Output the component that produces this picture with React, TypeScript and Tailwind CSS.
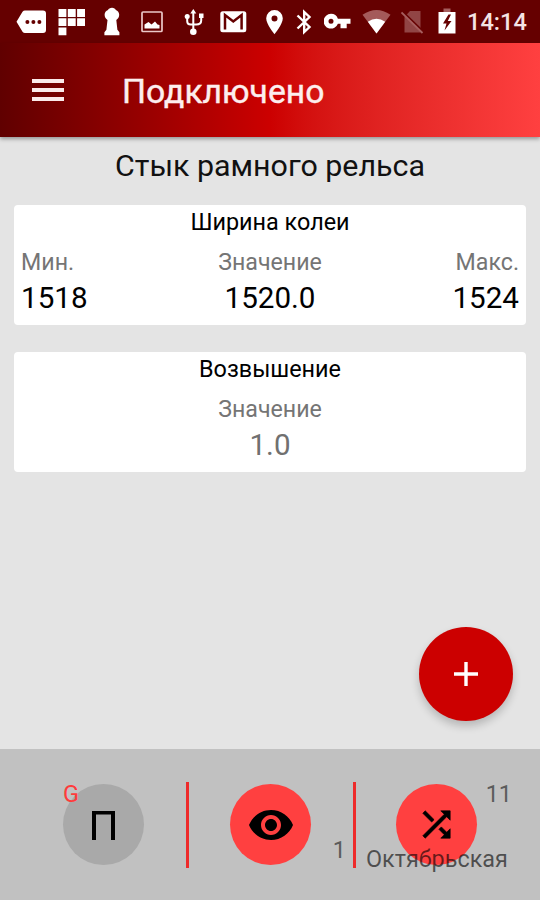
import type { ReactNode } from "react";

function StatusIcons() {
  return (
    <div className="flex h-[43px] items-center bg-[#650000] text-white">
      <svg className="ml-4 h-[43px] w-[30px] shrink-0" viewBox="16 0 30 43" fill="#fff">
        <path d="M25 10.5h18q3 0 3 3v16.500q0 3-3 3H25q-1.500 0-2.500-1.300L16.500 21.800l6-10q1-1.300 2.500-1.300z" />
        <g fill="#650000">
          <circle cx="27.400" cy="22" r="2" />
          <circle cx="33.400" cy="22" r="2" />
          <circle cx="39.400" cy="22" r="2" />
        </g>
      </svg>
      <svg className="ml-3 h-[43px] w-[27px] shrink-0" viewBox="58 0 27 43" fill="#fff">
        <path d="M58.500 9h7.900v7.900h-7.900zM67.800 9h7.900v7.900h-7.900zM77.100 9h7.900v7.900h-7.900zM58.500 18.200h7.900v7.900h-7.900zM67.800 18.200h7.900v7.900h-7.900zM77.100 18.200h7.900v7.900h-7.900zM58.500 27.400h7.900v7.900h-7.900z" />
      </svg>
      <svg className="ml-[18px] h-[43px] w-[18px] shrink-0" viewBox="103 0 18 43" fill="#fff">
        <path d="M112 7.800c2 0 3.200 1 3.800 2.200 2 .7 3.400 2.500 3.400 4.800 0 2.500-1.400 4.200-2.900 5.200l1.100 9.700 2 2.500v3H104.400v-3l2-2.500 1.100-9.700c-1.500-1-2.900-2.700-2.900-5.200 0-2.300 1.400-4.100 3.400-4.800.600-1.200 2-2.200 4-2.200z" />
      </svg>
      <svg className="ml-5 h-[43px] w-[22px] shrink-0" viewBox="141 0 22 43">
        <rect x="142" y="12" width="20" height="19.500" rx="1" fill="none" stroke="#ecc8c8" strokeWidth="1.700" />
        <path d="M144.500 28.500v-4l4-2.500 3 2.500 3.500-3 2.500 3 2 .5v3.500z" fill="#fff" />
      </svg>
      <svg className="ml-[21px] h-[43px] w-[20px] shrink-0" viewBox="184 0 20 43" fill="#fff">
        <path d="M193.300 9l3 4.500h-6zM199 13.500h4.500V18H199z" />
        <circle cx="187.200" cy="16.500" r="2.500" />
        <circle cx="193.300" cy="31.800" r="3.300" />
        <path d="M193.300 12v18M187.200 17v4q0 3.500 3.500 3.500h5.500q5 0 5-4v-3" fill="none" stroke="#fff" strokeWidth="2" />
      </svg>
      <svg className="ml-4 h-[43px] w-[27px] shrink-0" viewBox="220 0 27 43">
        <rect x="220.300" y="11.300" width="26" height="21" rx="2.500" fill="#fff" />
        <path d="M225 29.500V15l8.300 6.500L241.600 15v14.500" fill="none" stroke="#650000" strokeWidth="2.500" />
      </svg>
      <svg className="ml-[19px] h-[43px] w-[17px] shrink-0" viewBox="266 0 17 43">
        <path fillRule="evenodd" d="M274.500 10a8.300 8.300 0 0 0-8.300 8.300c0 6.200 8.300 16 8.300 16s8.300-9.800 8.300-16a8.300 8.300 0 0 0-8.300-8.300zm0 5.400a3 3 0 1 1 0 6 3 3 0 0 1 0-6z" fill="#fff" />
      </svg>
      <svg className="ml-[13px] h-[43px] w-[16px] shrink-0" viewBox="296 0 16 43" fill="none" stroke="#fff" strokeWidth="2.400">
        <path d="M297.500 15.500l12 11.500-5.300 5V12l5.300 5-12 11.500" />
      </svg>
      <svg className="ml-3 h-[43px] w-[27px] shrink-0" viewBox="324 0 27 43">
        <path fillRule="evenodd" d="M331 13.800a7.400 7.400 0 1 0 6.900 10h2.600v4.400h6.200v-4.400h3.800v-5h-12.600a7.400 7.400 0 0 0-6.900-5zm0 5a2.500 2.500 0 1 1 0 5 2.500 2.500 0 0 1 0-5z" fill="#fff" />
      </svg>
      <svg className="ml-[11px] h-[43px] w-[30px] shrink-0" viewBox="362 0 30 43">
        <path d="M376.500 33.500L362.500 14.800q14-9.500 28 0z" fill="#a45a5a" />
        <path d="M376.500 33.500L367.800 21.700q8.700-6 17.400 0z" fill="#fff" />
      </svg>
      <svg className="ml-[9px] h-[43px] w-[23px] shrink-0" viewBox="401 0 23 43">
        <path d="M410 11h10.500v21.500h-16V17z" fill="#914545" />
        <path d="M403.500 12.500l20.500 20" stroke="#650000" strokeWidth="2" />
        <path d="M401.500 12.500l21 20.500" stroke="#a65e5e" strokeWidth="1.800" />
      </svg>
      <svg className="ml-[14px] h-[43px] w-[18px] shrink-0" viewBox="438 0 18 43">
        <path d="M443.500 8.500h7V12h-7z" fill="#a65e5e" />
        <path d="M438.500 12h17v21.500h-17z" fill="#fff" />
        <path d="M448.500 14.500l-5.500 9h3.500l-2 7 7-9.500h-3.700l3.200-6.500z" fill="#650000" />
      </svg>
      <span className="mt-[2px] ml-[11px] text-[23.6px] leading-none font-medium text-[#f5e4e4]">14:14</span>
    </div>
  );
}

function Card({ title, children }: { title: string; children: ReactNode }) {
  return (
    <section className="h-[120px] rounded-[4px] bg-white px-[7px] pt-[3px]">
      <h2 className="text-center text-[23.4px] leading-[29px] text-black">{title}</h2>
      {children}
    </section>
  );
}

function Field({ label, value, className }: { label: string; value: string; className: string }) {
  return (
    <div className={className}>
      <p className="text-[23.2px] leading-7 text-[#757575]">{label}</p>
      <p className="text-[29.6px] leading-[45px]">{value}</p>
    </div>
  );
}

export default function App() {
  return (
    <div className="flex h-[900px] w-[540px] flex-col overflow-hidden bg-[#e4e4e4] font-['Roboto',sans-serif]">
      <StatusIcons />
      <header className="flex h-[94px] shrink-0 items-center bg-linear-to-r from-[#600000] via-[#cc0000] to-[#ff4040] pl-8 shadow-[0_2px_4px_rgba(0,0,0,0.35)]">
        <button className="flex w-8 flex-col gap-[5px]" aria-label="Меню">
          <span className="h-1 bg-[#fbeaea]" />
          <span className="h-1 bg-[#fbeaea]" />
          <span className="h-1 bg-[#fbeaea]" />
        </button>
        <h1 className="mt-[3px] ml-[58px] text-[33.7px] leading-none font-normal text-[#fdeeee] [-webkit-text-stroke:0.4px_#fdeeee]">
          Подключено
        </h1>
      </header>

      <main className="relative flex-1 px-[14px] pt-[9px]">
        <p className="text-center text-[30.4px] leading-10 text-[#111]">Стык рамного рельса</p>
        <div className="mt-[18.500px] flex flex-col gap-[27px]">
          <Card title="Ширина колеи">
            <div className="mt-[11px] grid grid-cols-3 text-black">
              <Field label="Мин." value="1518" className="text-left" />
              <Field label="Значение" value="1520.0" className="text-center" />
              <Field label="Макс." value="1524" className="text-right" />
            </div>
          </Card>
          <Card title="Возвышение">
            <Field label="Значение" value="1.0" className="mt-[11px] text-center text-[#707070]" />
          </Card>
        </div>
        <button
          className="absolute right-[27px] bottom-[28px] flex size-[94px] items-center justify-center rounded-full bg-[#cc0000] shadow-[0_5px_8px_rgba(0,0,0,0.2)]"
          aria-label="Добавить"
        >
          <svg className="size-6" viewBox="0 0 24 24" stroke="#fff" strokeWidth="3.400">
            <path d="M12 0v24M0 12h24" />
          </svg>
        </button>
      </main>

      <footer className="flex h-[151px] shrink-0 items-center bg-[#c1c1c1] text-[23.4px] leading-7 text-[#5c5c5c]">
        <div className="flex w-[186px] justify-end pr-[42px]">
          <button className="relative flex size-[81px] items-center justify-center rounded-full bg-[#a9a9a9]">
            <svg className="mt-[2px] h-[29px] w-[23px]" viewBox="0 0 23 29" fill="none" stroke="#000" strokeWidth="4">
              <path d="M2 29V1.500h19V29" />
            </svg>
            <span className="absolute -top-[4px] left-0 text-[#ff3b3b]">G</span>
          </button>
        </div>
        <div className="h-[86px] w-[3px] bg-[#ee2b2b]" />
        <div className="relative flex w-[164px] pl-[41px]">
          <button className="flex size-[81px] items-center justify-center rounded-full bg-[#ff4040]" aria-label="Просмотр">
            <svg className="size-[48px]" viewBox="0 0 24 24" fill="#000">
              <path d="M12 4.500C7 4.500 2.730 7.610 1 12c1.730 4.390 6 7.500 11 7.500s9.270-3.110 11-7.500c-1.730-4.390-6-7.500-11-7.500zM12 17c-2.760 0-5-2.240-5-5s2.240-5 5-5 5 2.240 5 5-2.240 5-5 5zm0-8c-1.660 0-3 1.340-3 3s1.340 3 3 3 3-1.340 3-3-1.340-3-3-3z" />
            </svg>
          </button>
          <span className="absolute right-[7px] bottom-px">1</span>
        </div>
        <div className="h-[86px] w-[3px] bg-[#ee2b2b]" />
        <div className="relative flex flex-1 pl-[40px]">
          <button className="flex size-[81px] items-center justify-center rounded-full bg-[#ff4040]" aria-label="Переключить">
            <svg className="size-[41px]" viewBox="0 0 24 24" fill="#000" stroke="#000" strokeWidth="0.400">
              <path d="M10.590 9.170L5.410 4 4 5.410l5.170 5.170 1.420-1.410zM14.500 4l2.040 2.040L4 18.590 5.410 20 17.960 7.460 20 9.500V4h-5.500zm.330 9.410l-1.410 1.410 3.130 3.130L14.500 20H20v-5.500l-2.040 2.040-3.130-3.130z" />
            </svg>
          </button>
          <span className="absolute -top-[4px] right-[28px]">11</span>
          <span className="absolute -bottom-[8px] left-[10px] text-black/60">Октябрьская</span>
        </div>
      </footer>
    </div>
  );
}
